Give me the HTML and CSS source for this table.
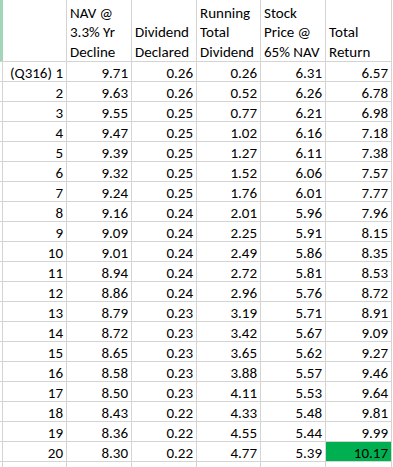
FILE: index.html
```html
<!DOCTYPE html>
<html>
<head>
<meta charset="utf-8">
<link rel="stylesheet" href="styles.css">
</head>
<body>
<div class="sheet">
  <div class="cell edge head-edge"></div>
  <div class="cell head"></div>
  <div class="cell head"><span class="wrap">NAV @<br>3.3% Yr<br>Decline</span></div>
  <div class="cell head"><span class="wrap">Dividend<br>Declared</span></div>
  <div class="cell head"><span class="wrap">Running<br>Total<br>Dividend</span></div>
  <div class="cell head"><span class="wrap">Stock<br>Price @<br>65% NAV</span></div>
  <div class="cell head"><span class="wrap">Total<br>Return</span></div>
</div>
<div class="sheet body-rows">
  <div class="cell edge"></div><div class="cell num">(Q316) 1</div><div class="cell num">9.71</div><div class="cell num">0.26</div><div class="cell num">0.26</div><div class="cell num">6.31</div><div class="cell num">6.57</div>
  <div class="cell edge"></div><div class="cell num">2</div><div class="cell num">9.63</div><div class="cell num">0.26</div><div class="cell num">0.52</div><div class="cell num">6.26</div><div class="cell num">6.78</div>
  <div class="cell edge"></div><div class="cell num">3</div><div class="cell num">9.55</div><div class="cell num">0.25</div><div class="cell num">0.77</div><div class="cell num">6.21</div><div class="cell num">6.98</div>
  <div class="cell edge"></div><div class="cell num">4</div><div class="cell num">9.47</div><div class="cell num">0.25</div><div class="cell num">1.02</div><div class="cell num">6.16</div><div class="cell num">7.18</div>
  <div class="cell edge"></div><div class="cell num">5</div><div class="cell num">9.39</div><div class="cell num">0.25</div><div class="cell num">1.27</div><div class="cell num">6.11</div><div class="cell num">7.38</div>
  <div class="cell edge"></div><div class="cell num">6</div><div class="cell num">9.32</div><div class="cell num">0.25</div><div class="cell num">1.52</div><div class="cell num">6.06</div><div class="cell num">7.57</div>
  <div class="cell edge"></div><div class="cell num">7</div><div class="cell num">9.24</div><div class="cell num">0.25</div><div class="cell num">1.76</div><div class="cell num">6.01</div><div class="cell num">7.77</div>
  <div class="cell edge"></div><div class="cell num">8</div><div class="cell num">9.16</div><div class="cell num">0.24</div><div class="cell num">2.01</div><div class="cell num">5.96</div><div class="cell num">7.96</div>
  <div class="cell edge"></div><div class="cell num">9</div><div class="cell num">9.09</div><div class="cell num">0.24</div><div class="cell num">2.25</div><div class="cell num">5.91</div><div class="cell num">8.15</div>
  <div class="cell edge"></div><div class="cell num">10</div><div class="cell num">9.01</div><div class="cell num">0.24</div><div class="cell num">2.49</div><div class="cell num">5.86</div><div class="cell num">8.35</div>
  <div class="cell edge"></div><div class="cell num">11</div><div class="cell num">8.94</div><div class="cell num">0.24</div><div class="cell num">2.72</div><div class="cell num">5.81</div><div class="cell num">8.53</div>
  <div class="cell edge"></div><div class="cell num">12</div><div class="cell num">8.86</div><div class="cell num">0.24</div><div class="cell num">2.96</div><div class="cell num">5.76</div><div class="cell num">8.72</div>
  <div class="cell edge"></div><div class="cell num">13</div><div class="cell num">8.79</div><div class="cell num">0.23</div><div class="cell num">3.19</div><div class="cell num">5.71</div><div class="cell num">8.91</div>
  <div class="cell edge"></div><div class="cell num">14</div><div class="cell num">8.72</div><div class="cell num">0.23</div><div class="cell num">3.42</div><div class="cell num">5.67</div><div class="cell num">9.09</div>
  <div class="cell edge"></div><div class="cell num">15</div><div class="cell num">8.65</div><div class="cell num">0.23</div><div class="cell num">3.65</div><div class="cell num">5.62</div><div class="cell num">9.27</div>
  <div class="cell edge"></div><div class="cell num">16</div><div class="cell num">8.58</div><div class="cell num">0.23</div><div class="cell num">3.88</div><div class="cell num">5.57</div><div class="cell num">9.46</div>
  <div class="cell edge"></div><div class="cell num">17</div><div class="cell num">8.50</div><div class="cell num">0.23</div><div class="cell num">4.11</div><div class="cell num">5.53</div><div class="cell num">9.64</div>
  <div class="cell edge"></div><div class="cell num">18</div><div class="cell num">8.43</div><div class="cell num">0.22</div><div class="cell num">4.33</div><div class="cell num">5.48</div><div class="cell num">9.81</div>
  <div class="cell edge"></div><div class="cell num">19</div><div class="cell num">8.36</div><div class="cell num">0.22</div><div class="cell num">4.55</div><div class="cell num">5.44</div><div class="cell num">9.99</div>
  <div class="cell edge"></div><div class="cell num">20</div><div class="cell num">8.30</div><div class="cell num">0.22</div><div class="cell num">4.77</div><div class="cell num">5.39</div><div class="cell num highlight">10.17</div>
  <div class="cell edge"></div><div class="cell"></div><div class="cell"></div><div class="cell"></div><div class="cell"></div><div class="cell"></div><div class="cell"></div>
</div>
</body>
</html>
```

FILE: styles.css
```css
html, body {
  margin: 0;
  padding: 0;
  background: #ffffff;
  overflow: hidden;
}

body {
  font-family: Calibri, Carlito, "Liberation Sans", Arial, sans-serif;
  font-size: 15px;
  color: #000000;
}

.sheet {
  display: grid;
  grid-template-columns: 3px 64px 65px 65px 64px 65px 66px;
  grid-template-rows: 62px;
  grid-auto-rows: 20px;
  width: 392px;
}

.body-rows {
  grid-template-rows: none;
}

.cell {
  box-sizing: border-box;
  border-right: 1px solid #d4d4d4;
  border-bottom: 1px solid #d4d4d4;
  display: flex;
  align-items: flex-end;
  line-height: 16px;
  white-space: nowrap;
  overflow: visible;
}

.head {
  justify-content: flex-start;
  padding-left: 3px;
  line-height: 19.5px;
}

.wrap {
  display: block;
  margin-bottom: -1px;
}

.num {
  justify-content: flex-end;
  padding-right: 3px;
}

.edge {
  padding: 0;
}

.head-edge {
  background: #a3d6b8;
  border-right: none;
}

.highlight {
  background: #00b050;
}
```
